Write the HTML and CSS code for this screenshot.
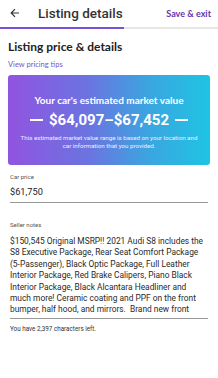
FILE: index.html
```html
<!DOCTYPE html>
<html>
<head>
<meta charset="utf-8">
<link rel="stylesheet" href="styles.css">
</head>
<body>
<header class="topbar">
  <span class="back">
    <svg width="10" height="10" viewBox="0 0 10 10"><path d="M9 5H1.5M5 1.2L1.2 5L5 8.8" fill="none" stroke="#333" stroke-width="1.2"/></svg>
  </span>
  <span class="title">Listing details</span>
  <span class="save">Save &amp; exit</span>
</header>
<div class="progress"><div class="progress-fill" style="width:57%"></div></div>
<main class="content">
  <h1 class="heading">Listing price &amp; details</h1>
  <a class="tips">View pricing tips</a>
  <section class="card">
    <div class="card-title">Your car's estimated market value</div>
    <div class="card-range"><span class="dash"></span>$64,097–$67,452<span class="dash"></span></div>
    <div class="card-note">This estimated market value range is based on your location and car information that you provided.</div>
  </section>
  <div class="field price">
    <div class="label">Car price</div>
    <div class="value">$61,750</div>
  </div>
  <div class="field notes">
    <div class="label">Seller notes</div>
    <div class="value notes-text">$150,545 Original MSRP!! 2021 Audi S8 includes the S8 Executive Package, Rear Seat Comfort Package (5-Passenger), Black Optic Package, Full Leather Interior Package, Red Brake Calipers, Piano Black Interior Package, Black Alcantara Headliner and much more! Ceramic coating and PPF on the front bumper, half hood, and mirrors.&nbsp; Brand new front</div>
  </div>
  <div class="helper">You have 2,397 characters left.</div>
</main>
</body>
</html>
```
FILE: styles.css
```css
html, body { margin: 0; padding: 0; background: #fff; }
body { width: 218px; height: 378px; overflow: hidden; font-family: Roboto, "Liberation Sans", sans-serif; color: #222; }
.topbar { display: flex; align-items: center; height: 26px; padding: 0 7px 0 10px; }
.back { display: flex; width: 10px; height: 10px; margin-right: 18px; }
.title { font-size: 13.5px; font-weight: 500; color: #333; flex: 1; }
.save { font-family: Lato, sans-serif; font-size: 9px; font-weight: 700; color: #5f35ad; }
.progress { height: 2px; background: #e6e6e6; margin-top: 1px; }
.progress-fill { height: 100%; background: #7b4fd6; }
.content { padding: 0 8px; }
.heading { font-family: Lato, sans-serif; font-size: 12px; font-weight: 700; margin: 10px 0 0; color: #222; line-height: 15px; }
.tips { display: block; font-family: Lato, sans-serif; font-size: 7.5px; color: #7a55c4; margin-top: 6px; line-height: 10px; }
.card { margin-top: 5px; height: 90px; border-radius: 3px; background: linear-gradient(90deg, #9154e0 0%, #6b74e0 40%, #3aa6e0 70%, #1fc4e3 100%); color: #fff; display: flex; flex-direction: column; align-items: center; padding-top: 19px; box-sizing: border-box; }
.card-title { font-family: Lato, sans-serif; font-weight: 700; font-size: 10px; line-height: 12px; }
.card-range { display: flex; align-items: center; gap: 6px; font-weight: 700; font-size: 15px; margin-top: 5px; line-height: 18px; }
.dash { display: block; width: 13px; height: 1.6px; background: #fff; }
.card-note { font-size: 6.2px; text-align: center; line-height: 8px; margin-top: 5px; width: 180px; color: #f2ecff; }
.field { margin: 0 2px; border-bottom: 1px solid #999; }
.label { font-size: 6px; color: #555; line-height: 8px; }
.value { font-size: 9.2px; color: #222; line-height: 12px; }
.price { margin-top: 8px; padding-bottom: 4px; }
.price .label { margin-bottom: 5px; }
.notes { margin-top: 18px; padding-bottom: 2px; }
.notes .label { margin-bottom: 7px; }
.notes-text { font-size: 8.4px; line-height: 11.4px; color: #2a2a2a; }
.helper { font-size: 6.3px; color: #333; margin: 6px 2px 0; line-height: 8px; }
```
